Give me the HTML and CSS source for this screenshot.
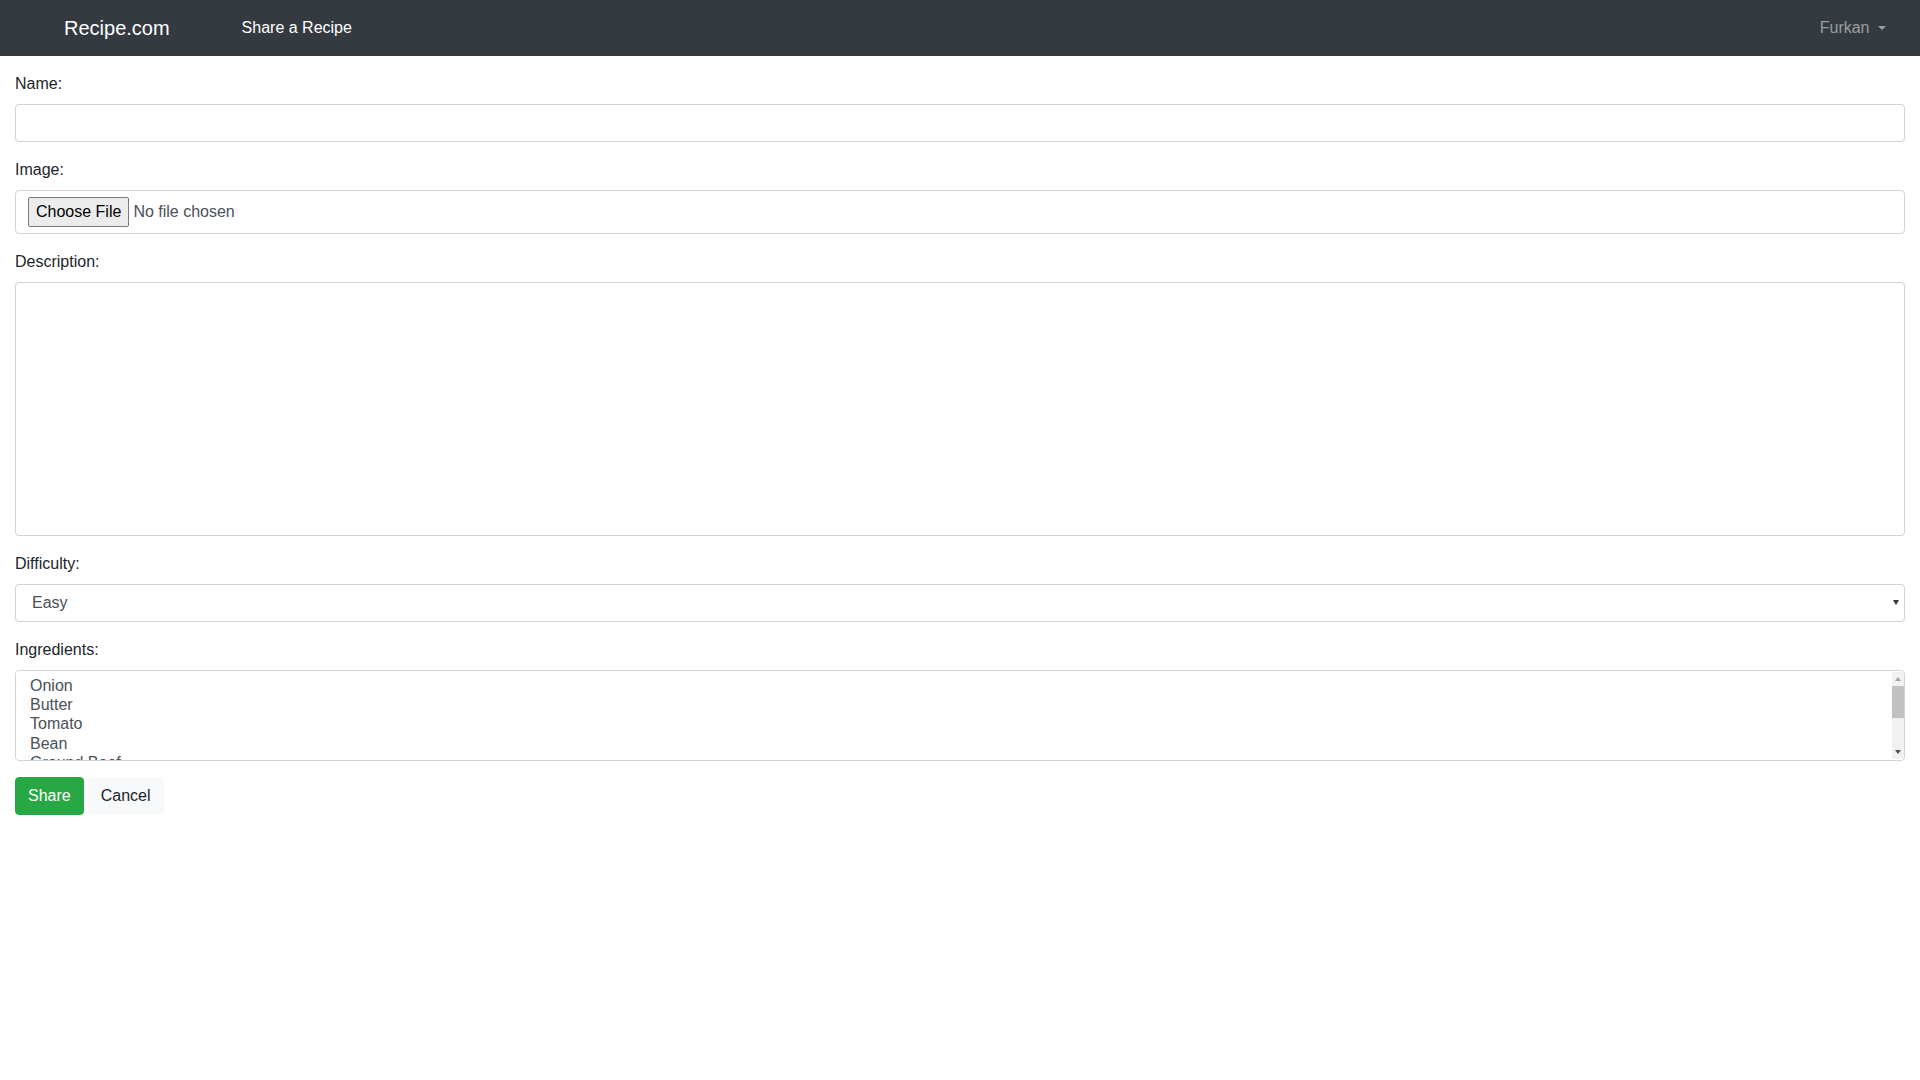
FILE: index.html
```html
<!DOCTYPE html>
<html lang="en">
<head>
<meta charset="utf-8">
<title>Share a Recipe - Recipe.com</title>
<link rel="stylesheet" href="styles.css">
</head>
<body>
<nav class="navbar">
  <div class="navbar-left">
    <a class="brand" href="#">Recipe.com</a>
    <ul class="nav">
      <li class="nav-item"><a class="nav-link active" href="#">Share a Recipe</a></li>
    </ul>
  </div>
  <div class="navbar-right">
    <a class="nav-link dropdown-toggle" href="#">Furkan</a>
  </div>
</nav>
<main class="container">
  <form class="recipe-form">
    <div class="form-group">
      <label class="form-label" for="name">Name:</label>
      <input class="form-control" type="text" id="name">
    </div>
    <div class="form-group">
      <label class="form-label" for="image">Image:</label>
      <input class="form-control file-control" type="file" id="image">
    </div>
    <div class="form-group">
      <label class="form-label" for="description">Description:</label>
      <textarea class="form-control textarea" id="description" rows="10"></textarea>
    </div>
    <div class="form-group">
      <label class="form-label" for="difficulty">Difficulty:</label>
      <div class="select-wrap">
        <select class="form-control select" id="difficulty">
          <option>Easy</option>
          <option>Medium</option>
          <option>Hard</option>
        </select>
      </div>
    </div>
    <div class="form-group">
      <label class="form-label" for="ingredients">Ingredients:</label>
      <div class="multi-wrap">
        <select class="form-control multi" id="ingredients" multiple>
          <option>Onion</option>
          <option>Butter</option>
          <option>Tomato</option>
          <option>Bean</option>
          <option>Ground Beef</option>
          <option>Chicken</option>
          <option>Rice</option>
          <option>Potato</option>
        </select>
        <div class="scrollbar" aria-hidden="true">
          <div class="sb-btn sb-up"><span class="tri-up"></span></div>
          <div class="sb-track"><div class="sb-thumb"></div></div>
          <div class="sb-btn sb-down"><span class="tri-down"></span></div>
        </div>
      </div>
    </div>
    <div class="actions">
      <button type="submit" class="btn btn-success">Share</button>
      <button type="button" class="btn btn-light">Cancel</button>
    </div>
  </form>
</main>
</body>
</html>
```
FILE: styles.css
```css
* {
  box-sizing: border-box;
}

html, body {
  margin: 0;
  padding: 0;
}

body {
  font-family: "Liberation Sans", Arial, sans-serif;
  font-size: 16px;
  line-height: 1.5;
  color: #212529;
  background: #fff;
}

a {
  text-decoration: none;
}

.navbar {
  display: flex;
  align-items: center;
  justify-content: space-between;
  background: #343a40;
  padding: 8px 16px;
  height: 56px;
}

.navbar-left {
  display: flex;
  align-items: center;
}

.brand {
  margin-left: 48px;
  margin-right: 16px;
  padding: 5px 0;
  font-size: 20px;
  line-height: 30px;
  color: #fff;
}

.nav {
  list-style: none;
  margin: 0;
  padding: 0;
  display: flex;
}

.nav-item {
  margin-left: 48px;
}

.nav-link {
  display: block;
  padding: 8px;
  line-height: 24px;
  color: rgba(255, 255, 255, 0.5);
}

.nav-link.active {
  color: #fff;
}

.navbar-right {
  margin-right: 10px;
}

.dropdown-toggle::after {
  content: "";
  display: inline-block;
  margin-left: 8.5px;
  vertical-align: 3px;
  border-top: 4.8px solid;
  border-right: 4.8px solid transparent;
  border-left: 4.8px solid transparent;
  border-bottom: 0;
}

.container {
  padding: 16px 15px 0;
}

.form-group {
  margin-bottom: 16px;
}

.form-label {
  display: inline-block;
  margin-bottom: 8px;
}

.form-control {
  display: block;
  width: 100%;
  height: 38px;
  padding: 6px 12px;
  font-family: inherit;
  font-size: 16px;
  line-height: 1.5;
  color: #495057;
  background: #fff;
  border: 1px solid #ced4da;
  border-radius: 4px;
  margin: 0;
}

.file-control {
  height: auto;
}

.file-control::file-selector-button {
  font-family: inherit;
  font-size: 16px;
  line-height: 24px;
  color: #000;
  padding: 2px 7px;
  margin: 0 4px 0 0;
  background: #ececec;
  border: 1px solid #7a7a7a;
  border-radius: 2px;
}

.textarea {
  height: auto;
  resize: none;
}

.select-wrap {
  position: relative;
}

.select {
  appearance: none;
  -webkit-appearance: none;
  padding-left: 16px;
  padding-right: 24px;
}

.select-wrap::after {
  content: "";
  position: absolute;
  right: 6px;
  top: 16px;
  border-top: 5px solid #333;
  border-left: 3.5px solid transparent;
  border-right: 3.5px solid transparent;
  pointer-events: none;
}

.multi-wrap {
  position: relative;
}

.multi {
  height: auto;
  padding-right: 24px;
}

.scrollbar {
  position: absolute;
  top: 2px;
  bottom: 2px;
  right: 1px;
  width: 12px;
  display: flex;
  flex-direction: column;
  background: #f1f1f1;
  pointer-events: none;
}

.sb-btn {
  height: 13px;
  display: flex;
  align-items: center;
  justify-content: center;
  flex: none;
}

.sb-track {
  flex: 1;
  padding-top: 1px;
}

.sb-thumb {
  width: 100%;
  height: 32px;
  background: #c1c1c1;
}

.tri-up {
  width: 0;
  height: 0;
  border-bottom: 4px solid #a3a3a3;
  border-left: 3.5px solid transparent;
  border-right: 3.5px solid transparent;
}

.tri-down {
  width: 0;
  height: 0;
  border-top: 4px solid #505050;
  border-left: 3.5px solid transparent;
  border-right: 3.5px solid transparent;
}

.actions {
  display: flex;
  gap: 4px;
}

.btn {
  display: inline-block;
  padding: 6px 12px;
  font-family: inherit;
  font-size: 16px;
  line-height: 1.5;
  border: 1px solid transparent;
  border-radius: 4px;
  cursor: pointer;
}

.btn-success {
  color: #fff;
  background: #28a745;
  border-color: #28a745;
}

.btn-light {
  color: #212529;
  background: #f8f9fa;
  border-color: #f8f9fa;
}
```
